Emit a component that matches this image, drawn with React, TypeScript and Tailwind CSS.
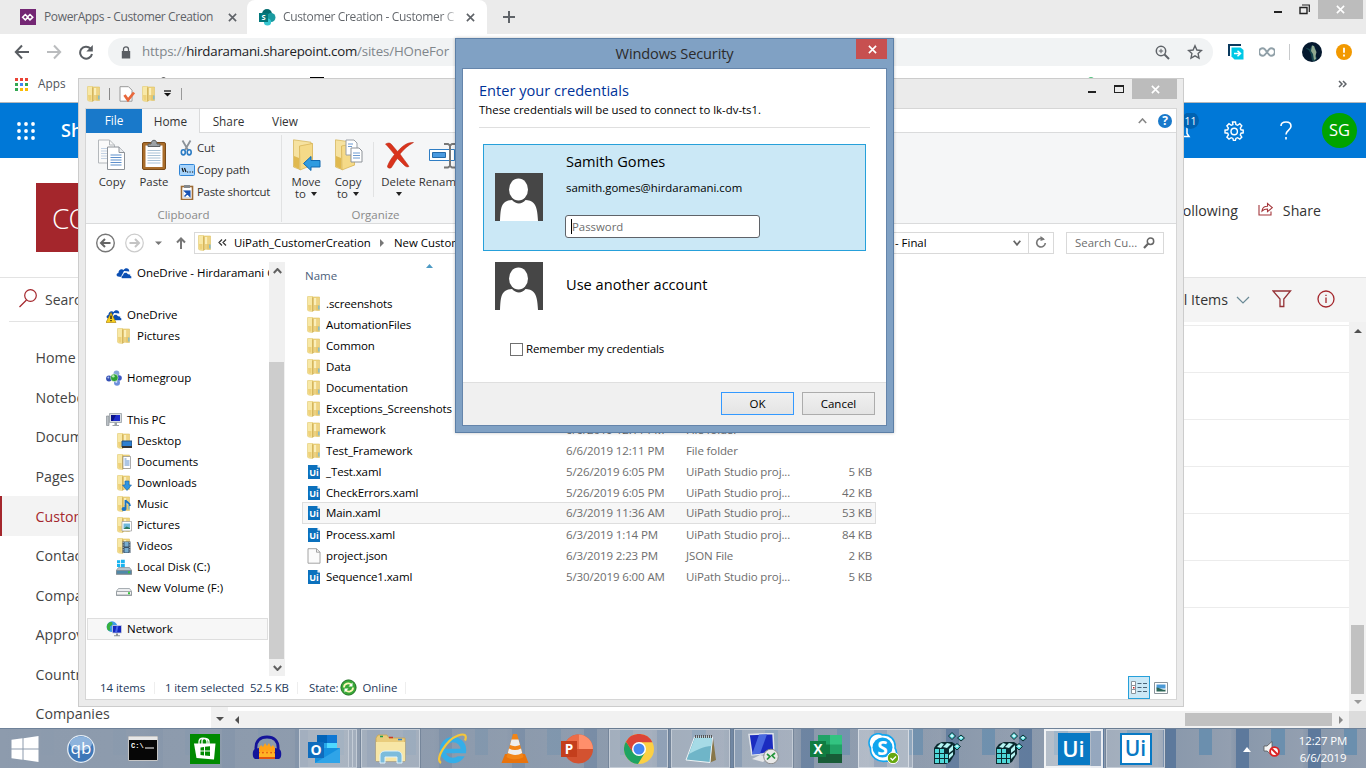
import React from "react";

type Kids = { children?: React.ReactNode };

/* ---------- small icons ---------- */

const Folder = ({ children }: Kids) => (
  <svg width="16" height="16" viewBox="0 0 16 16" className="shrink-0">
    <path d="M6 1h7.500v13.500H6z" fill="#f0d67c" stroke="#dcc067" strokeWidth=".6" />
    <path d="M1.500.6 6.500.3v15.200L2.400 15l-.9-1z" fill="#f8e8a6" stroke="#e3c970" strokeWidth=".6" />
    <path d="M2 9h3.500v5.500H2.500z" fill="#efd27a" />
    <path d="M6.400 1.200 7.600 2v13l-1.200.5z" fill="#c9a548" />
    <path d="M7.700 2h2.600v12.500H7.700z" fill="#fbefbb" />
    <path d="M10.400 2h2.800v12h-2.800z" fill="#eed485" />
    <path d="M8 9h5v5H8z" fill="#e2be5c" fillOpacity=".6" />
    <path d="M12.300 9.500h1.200v4h-1.200z" fill="#6ab8e6" />
    {children}
  </svg>
);

const UiFile = () => (
  <svg width="16" height="16" viewBox="0 0 16 16" className="shrink-0 font-['Open_Sans',sans-serif]">
    <path d="M2 1h9.500L14 3.500V15H2z" fill="#0c71bd" />
    <path d="M11.500 1 14 3.500h-2.500z" fill="#fff" />
    <text x="8" y="11.600" fontSize="9" fontWeight="700" fill="#fff" textAnchor="middle">Ui</text>
  </svg>
);

const BlankFile = () => (
  <svg width="16" height="16" viewBox="0 0 16 16" className="shrink-0">
    <path d="M2 .7h8.500L14 4.200v11H2z" fill="#fbfbfb" stroke="#9a9a9a" strokeWidth=".9" />
    <path d="M10.500.7v3.500H14" fill="none" stroke="#9a9a9a" strokeWidth=".9" />
  </svg>
);

const Cloud = ({ warn }: { warn?: boolean }) => (
  <svg width="16" height="16" viewBox="0 0 16 16" className="shrink-0">
    <path d="M2 11.500C0 11 .2 8 2.400 8c0-3 3-5 5.200-3C9.300 2 13.500 3 13.300 6.500L8 6 5 12z" fill="#0b4fb3" />
    <path d="M6.500 13.500C4.600 13 5 10.300 6.800 10.200 7 7 11 6.500 12 9c2.400-.3 2.600 1 2.500 1.700 1.600.3 1.700 2.800 0 2.800z" fill="#0b4fb3" stroke="#fff" strokeWidth=".6" />
    {warn && (
      <>
        <path d="M5 5.500 10 15.500H0z" fill="#f8cf1c" stroke="#a97c00" strokeWidth=".6" />
        <path d="M5 8.500v3.500M5 13v1.300" stroke="#222" strokeWidth="1.400" />
      </>
    )}
  </svg>
);

const Homegroup = () => (
  <svg width="16" height="16" viewBox="0 0 16 16" className="shrink-0">
    <circle cx="3" cy="8.500" r="2.900" fill="#3450b4" />
    <circle cx="2.300" cy="7.500" r="1" fill="#a9bdf0" />
    <circle cx="10.500" cy="3.300" r="2.900" fill="#86a6d8" />
    <circle cx="13" cy="8" r="2.800" fill="#3c58c4" />
    <circle cx="11" cy="12.700" r="3" fill="#6c8fdc" />
    <circle cx="10.300" cy="11.800" r="1.100" fill="#cddbf8" />
    <circle cx="8.300" cy="7.800" r="3.800" fill="#2da134" stroke="#fff" strokeWidth=".5" />
    <circle cx="7.300" cy="6.300" r="1.300" fill="#b8ecb2" />
  </svg>
);

const Monitor = () => (
  <svg width="16" height="16" viewBox="0 0 16 16" className="shrink-0">
    <path d="M.5 4h2.500v9.500H.5z" fill="#b9bfc4" stroke="#7d858c" strokeWidth=".6" />
    <path d="M3.500 1.500h12v9h-12z" fill="#d9dde0" stroke="#8d959b" strokeWidth=".7" />
    <path d="M5 3h9v6H5z" fill="#1d2ccb" />
    <path d="m5 3 5 0-3 6H5z" fill="#0a128a" />
    <path d="M8.500 10.500h2.500V13H13v1H6.500v-1h2z" fill="#9aa1a6" />
  </svg>
);

const Network = () => (
  <svg width="16" height="16" viewBox="0 0 16 16" className="shrink-0">
    <circle cx="6" cy="5.700" r="5.400" fill="#3e9be8" />
    <path d="M2 2.500C5 0 7 1 6.500 3S3 5 4 7s0 3-1.500 2.500S0 5 2 2.500z" fill="#37b23c" />
    <path d="M6.500 4.500h9v7.500h-9z" fill="#1527c0" stroke="#cdd3da" strokeWidth=".8" />
    <path d="m10.500 5 2 0-1.500 6.500H9z" fill="#4a66e6" />
    <path d="M10 12.500h2v1.800h2v1H8v-1h2z" fill="#8b9298" />
  </svg>
);

const Disk = ({ win }: { win?: boolean }) => (
  <svg width="16" height="16" viewBox="0 0 16 16" className="shrink-0">
    {win && <path d="M1 1.200h3.200v3H1zM5 .8h3.800v3.400H5zM1 5h3.200v3H1zM5 5h3.800v3.500H5z" fill="#18b4f0" />}
    <path d="M2.500 8.500h11l2.300 3v4H.2v-4z" fill={win ? "#b8c4cb" : "#eceef0"} stroke="#878f95" strokeWidth=".7" />
    <path d="M.5 11.500h15V15H.5z" fill={win ? "#4f89a8" : "#f4f4f4"} stroke="#7f878d" strokeWidth=".7" />
    <path d="M12 12.200h2v2h-2z" fill="#35c23a" />
  </svg>
);

const CloseX = ({ c, s = 9, w = 1.8 }: { c: string; s?: number; w?: number }) => (
  <svg width={s} height={s} viewBox="0 0 10 10">
    <path d="m1 1 8 8M9 1 1 9" stroke={c} strokeWidth={w} />
  </svg>
);

const Avatar = () => (
  <svg width="48" height="48" viewBox="0 0 48 48" className="shrink-0">
    <path d="M0 0h48v48H0z" fill="#464646" />
    <ellipse cx="23.500" cy="16.500" rx="9.500" ry="11" fill="#fff" />
    <path d="M5 48c.5-10 .8-15 4-18 1.500-2 5-3 8-3 4 4.500 10 4.500 13.500 0 3 0 6.500 1 8 3 3 3 4 8 4.500 18z" fill="#fff" />
  </svg>
);

/* ---------- browser ---------- */

const TabStrip = () => (
  <div className="flex h-[34px] bg-[#ebebeb]">
    <div className="flex w-[247px] items-center pl-5">
      <svg width="16" height="16" viewBox="0 0 16 16">
        <path d="M0 0h16v16H0z" fill="#742774" />
        <path d="M5.300 5.500 8 8.200l-2.700 2.700L2.600 8.200zM10 5.500l2.800 2.700L10 10.900 7.300 8.200z" fill="none" stroke="#fff" strokeWidth="1.500" />
      </svg>
      <span className="ml-2 w-[184px] text-[12px] tracking-[-0.350px] whitespace-nowrap text-[#5f6368]">PowerApps - Customer Creation</span>
      <CloseX c="#5f6368" s={9} />
    </div>
    <div className="flex w-[240px] items-center rounded-t-lg bg-white pl-3">
      <svg width="17" height="17" viewBox="0 0 17 17" className="shrink-0">
        <circle cx="8" cy="5" r="5" fill="#036c70" />
        <circle cx="12" cy="8.500" r="4.500" fill="#1a9ba1" />
        <circle cx="8.500" cy="13" r="3.600" fill="#37c6d0" />
        <path d="M0 4h9v9H0z" fill="#03787c" />
        <text x="4.500" y="11.200" fontSize="7.500" fontWeight="700" fill="#fff" textAnchor="middle">S</text>
      </svg>
      <span className="ml-[7px] w-[178px] bg-[linear-gradient(90deg,#5f6368_158px,#fff_178px)] bg-clip-text text-[12px] tracking-[-0.350px] whitespace-nowrap text-transparent">
        Customer Creation - Customer C
      </span>
      <span className="ml-[5px]"><CloseX c="#5f6368" s={9} /></span>
    </div>
    <div className="flex items-center pl-[16px]">
      <svg width="12" height="12" viewBox="0 0 12 12">
        <path d="M6 0v12M0 6h12" stroke="#5f6368" strokeWidth="2" />
      </svg>
    </div>
    <div className="ml-auto flex h-[19px] items-center">
      <div className="mt-[5px] h-[2px] w-2 bg-[#222]" />
      <svg width="11" height="11" viewBox="0 0 11 11" className="ml-[17px]">
        <path d="M1 3.500h7v6H1z" fill="none" stroke="#222" strokeWidth="1.400" />
        <path d="M3 1h7.300v7" fill="none" stroke="#222" strokeWidth="1.200" />
      </svg>
      <div className="ml-2 flex h-[19px] w-[45px] items-center justify-center bg-[#bcbcbc]">
        <CloseX c="#fff" s={9} />
      </div>
      <div className="w-[3px]" />
    </div>
  </div>
);

const Toolbar = () => (
  <div className="flex h-9 items-center bg-white pl-[14px]">
    <svg width="80" height="16" viewBox="0 0 80 16" fill="none" strokeWidth="2">
      <path d="M15 8H2M8 1.500 1.800 8 8 14.500" stroke="#5a5e63" />
      <path d="M33 8h13M40 1.500 46.200 8 40 14.500" stroke="#babcbe" />
      <path d="M76.500 4.500A6 6 0 1 0 78 10" stroke="#5a5e63" />
      <path d="M78.800 1v6.500h-6.500z" fill="#5a5e63" />
    </svg>
    <div className="ml-[14px] flex h-7 w-[1105px] items-center rounded-full bg-[#f1f3f4] pl-[13px] text-[13.300px] tracking-[-0.150px] text-[#80868b]">
      <svg width="10" height="13" viewBox="0 0 10 13">
        <path d="M.8 5h8.400v7.500H.8z" fill="#5a5e63" />
        <path d="M2.500 5.500V3.300a2.500 2.500 0 0 1 5 0v2.200" fill="none" stroke="#5a5e63" strokeWidth="1.300" />
      </svg>
      <span className="ml-[11px] whitespace-nowrap">
        https://<span className="tracking-[-0.250px] text-[#202124]">hirdaramani.sharepoint.com</span>/sites/HOneFor
      </span>
      <svg width="15" height="15" viewBox="0 0 15 15" className="ml-auto" fill="none" stroke="#5f6368">
        <circle cx="6" cy="6" r="4.700" strokeWidth="1.500" />
        <path d="m9.500 9.500 4.500 4.500" strokeWidth="1.900" />
        <path d="M6 3.800v4.400M3.800 6h4.400" />
      </svg>
      <svg width="16" height="16" viewBox="0 0 16 16" className="mr-[10px] ml-[17px]">
        <path d="m8 1.800 1.900 4.200 4.500.5-3.300 3.100.9 4.500L8 11.800l-4 2.300.9-4.500L1.600 6.500l4.500-.5z" fill="none" stroke="#5f6368" strokeWidth="1.400" />
      </svg>
    </div>
    <svg width="16" height="16" viewBox="0 0 16 16" className="ml-[15px]">
      <path d="M1 12V1h12" fill="none" stroke="#0a3a5e" strokeWidth="2" />
      <path d="M3.500 3.500h9L15.500 6v9.500h-9l-3-3z" fill="#00c8e6" />
      <path d="M6 9.500h6M9.500 6.700l3 2.800-3 2.800" fill="none" stroke="#fff" strokeWidth="1.500" />
    </svg>
    <svg width="16" height="10" viewBox="0 0 16 10" className="ml-[15px]">
      <path d="M8 5C6 2 5.300 1.200 3.900 1.200a3.800 3.800 0 0 0 0 7.600C5.300 8.800 6 8 8 5s2.700-3.800 4.100-3.800a3.800 3.800 0 0 1 0 7.600C10.700 8.800 10 8 8 5z" fill="none" stroke="#90a0a8" strokeWidth="2" />
    </svg>
    <div className="ml-[14px] h-4 w-px bg-[#c8cacc]" />
    <svg width="20" height="20" viewBox="0 0 20 20" className="ml-[12px]">
      <circle cx="10" cy="10" r="10" fill="#04182e" />
      <path d="M3 5.500 8 7l2-4 2.500 1.500 1.500 4-1 3 2 5-2.500 3-2.500-1-1-6-2-4z" fill="#1d5357" fillOpacity=".8" />
      <path d="m10 3.500 2 .5 1 3 1.500 3-1 4 .5 3-2 1-1-6-2-3z" fill="#8fa890" />
    </svg>
    <svg width="16" height="16" viewBox="0 0 16 16" className="ml-[14px]">
      <circle cx="8" cy="8" r="8" fill="#f29900" />
      <path d="M8 3.700v5M8 10.500v2" stroke="#fff" strokeWidth="1.800" />
    </svg>
  </div>
);

const Bookmarks = () => (
  <div className="flex h-[33px] items-center border-b border-[#b5b8bb] bg-white pb-[4px] pl-[15px] text-[#50545a]">
    <svg width="13" height="13" viewBox="0 0 13 13">
      <path d="M0 0h3v3H0zM5 0h3v3H5zM10 0h3v3h-3z" fill="#ea4335" />
      <path d="M0 5h3v3H0zM10 5h3v3h-3zM0 10h3v3H0z" fill="#34a853" />
      <path d="M5 5h3v3H5z" fill="#4285f4" />
      <path d="M5 10h3v3H5zM10 10h3v3h-3z" fill="#fbbc05" />
    </svg>
    <span className="ml-[10px] text-[11.800px]">Apps</span>
    <span className="ml-[95px] h-[14px] w-[5px] rounded bg-[#666]" />
    <span className="ml-[144px] h-[14px] w-[14px] bg-black" />
    <span className="ml-[764px] h-[14px] w-[6px] rounded bg-[#4fc27b]" />
    <svg width="9" height="8" viewBox="0 0 9 8" className="mr-[19px] ml-auto">
      <path d="m1 1 3 3-3 3M5 1l3 3-3 3" fill="none" stroke="#5f6368" strokeWidth="1.500" />
    </svg>
  </div>
);

const SuiteBar = () => (
  <div className="flex h-[55px] items-center bg-[#0078d7] pl-[17px] text-white">
    <svg width="18" height="18" viewBox="0 0 18 18" fill="#fff">
      {[2, 9, 16].map((y) => [2, 9, 16].map((x) => <circle key={`${x}-${y}`} cx={x} cy={y} r="1.900" />))}
    </svg>
    <span className="ml-[26px] text-[18px] font-semibold">SharePoint</span>
    <svg width="44" height="36" viewBox="0 0 44 36" className="ml-auto">
      <path d="M7 23.500h17l-2-3V14a6 6 0 0 0-12 0v7z" fill="none" stroke="#fff" strokeWidth="1.500" />
      <circle cx="25.500" cy="7.500" r="8.500" fill="#0062b1" />
      <text x="25.500" y="11.500" fontSize="10.500" fill="#fff" textAnchor="middle">11</text>
    </svg>
    <svg width="20" height="20" viewBox="0 0 20 20" fill="none" stroke="#fff" strokeWidth="1.400" className="ml-[15px]">
      <path d="m8.500 1 .4 2.600-1.700.7L5 2.700 2.900 4.900 4.400 7l-.7 1.800L1 9.200v2.600l2.700.4.7 1.700-1.500 2.200L5 18.200l2.200-1.500 1.700.7.500 2h2l.5-2 1.700-.7 2.200 1.500 2-2.100-1.500-2.200.7-1.700 2.200-.4V9.200l-2.200-.4L16.300 7l1.500-2.100-2-2.200-2.200 1.600-1.700-.7L11.500 1z" />
      <circle cx="10.200" cy="10.500" r="3.200" />
    </svg>
    <svg width="12" height="19" viewBox="0 0 12 19" className="ml-[36px]">
      <path d="M1 5C1 2.300 3.200 1 6 1s5 1.500 5 4.200c0 3.800-5 4-5 8.300M6 16v2.500" fill="none" stroke="#fff" strokeWidth="1.600" />
    </svg>
    <div className="mr-[9px] ml-[30px] flex h-[35px] w-[35px] items-center justify-center rounded-full bg-[#00a300] text-[16.500px]">SG</div>
  </div>
);

const siteNav = ["Home", "Notebook", "Documents", "Pages", "Customer Creation", "Contacts", "Company", "Approvals", "Countries", "Companies"];

const Browser = () => (
  <div className="flex h-[728px] flex-col bg-white">
    <TabStrip />
    <Toolbar />
    <Bookmarks />
    <SuiteBar />
    <div className="flex h-[120px] border-b border-[#e3e3e3] pt-[25px] pl-9">
      <div className="h-[69px] w-[70px] overflow-hidden bg-[#a4262c] pt-[14px] pl-4 text-[28px] font-light tracking-[-1px] text-white">CO</div>
      <div className="mt-5 ml-auto flex h-4 items-center text-[14.200px] text-[#333]">
        <span>Following</span>
        <svg width="15" height="14" viewBox="0 0 15 14" className="-mt-1 ml-5" fill="none" stroke="#a4373c" strokeWidth="1.100">
          <path d="M1 3v10h12V9.500" />
          <path d="M4 9c.3-3 2-4.700 5.500-4.700V1.500l4.800 4.200-4.800 4V7C7 7 5.500 7.500 4 9z" />
        </svg>
        <span className="mr-[45px] ml-[10px]">Share</span>
      </div>
    </div>
    <div className="flex h-[450px]">
      <div className="relative flex w-[228px] flex-col overflow-hidden text-[14.200px] text-[#444]">
        <div className="ml-[9px] flex h-11 shrink-0 items-center border-b border-[#e3e3e3] pl-[10px]">
          <svg width="18" height="19" viewBox="0 0 18 19" fill="none" stroke="#a4262c" strokeWidth="1.200" className="-mt-[3px]">
            <circle cx="11.500" cy="6.500" r="5.800" />
            <path d="M7.500 11 .5 18" />
          </svg>
          <span className="ml-2 text-[14px]">Search</span>
        </div>
        <div className="flex shrink-0 flex-col pt-[16px]">
          {siteNav.map((n) => (
            <div
              key={n}
              className={
                n === "Customer Creation"
                  ? "flex h-[39.600px] items-center border-l-2 border-[#a4262c] bg-[#f3f3f3] pl-[33.500px] whitespace-nowrap text-[#a4262c]"
                  : "flex h-[39.600px] items-center pl-[35.500px] whitespace-nowrap"
              }
            >
              {n}
            </div>
          ))}
        </div>
        <div className="absolute top-0 right-0 flex h-[450px] w-[17px] items-end justify-center bg-[#f1f1f1] pb-[7px]">
          <svg width="8" height="4" viewBox="0 0 8 4"><path d="M0 0h8L4 4z" fill="#505050" /></svg>
        </div>
      </div>
      <div className="flex flex-1 flex-col">
        <div className="flex h-11 items-center justify-end bg-[#f4f4f4] text-[14.200px] text-[#333]">
          <span>All Items</span>
          <svg width="14" height="8" viewBox="0 0 14 8" className="ml-2"><path d="m1 1 6 6 6-6" fill="none" stroke="#6a8a96" strokeWidth="1.200" /></svg>
          <svg width="20" height="18" viewBox="0 0 20 18" className="-mt-[2px] ml-[22px]"><path d="M1 1h17.500l-6.700 8v7.500H8V9z" fill="none" stroke="#953236" strokeWidth="1.300" /></svg>
          <svg width="18" height="18" viewBox="0 0 18 18" className="-mt-[3px] mr-[31px] ml-[25px]" fill="none" stroke="#a4262c">
            <circle cx="9" cy="9" r="8" strokeWidth="1.300" />
            <path d="M9 7.500v5.500M9 4.700v1.300" strokeWidth="1.300" />
          </svg>
        </div>
        <div className="flex h-[389px]">
          <div className="flex-1 pt-[3px]">
            {[0, 1, 2, 3, 4, 5, 6].map((i) => (
              <div key={i} className="h-[47px] border-t border-[#ececec]" />
            ))}
          </div>
          <div className="flex w-[17px] flex-col items-center bg-[#f1f1f1] pt-[7px]">
            <svg width="8" height="4" viewBox="0 0 8 4"><path d="M0 4h8L4 0z" fill="#505050" /></svg>
            <div className="mt-[292px] h-[69px] w-[13px] bg-[#c1c1c1]" />
            <svg width="8" height="4" viewBox="0 0 8 4" className="mt-[6px]"><path d="M0 0h8L4 4z" fill="#9a9a9a" /></svg>
          </div>
        </div>
        <div className="flex h-[17px] items-center bg-[#f1f1f1] pl-[7px]">
          <svg width="4" height="8" viewBox="0 0 4 8"><path d="M4 0v8L0 4z" fill="#505050" /></svg>
          <div className="ml-auto h-[13px] w-[147px] bg-[#c1c1c1]" />
          <svg width="4" height="8" viewBox="0 0 4 8" className="mr-[6px] ml-[7px]"><path d="M0 0v8l4-4z" fill="#8a8a8a" /></svg>
          <div className="h-[17px] w-[17px] bg-[#dcdcdc]" />
        </div>
      </div>
    </div>
  </div>
);

/* ---------- explorer ---------- */

const BigFolder = ({ children }: Kids) => (
  <svg width="30" height="32" viewBox="0 0 30 32">
    <path d="M6 4h15.500v22.500L8 30z" fill="#e4c468" />
    <path d="M2.500.8 20 3.200v3L9 8v22.500L2.500 28z" fill="#f6e2a0" stroke="#d3b050" strokeWidth=".7" />
    <path d="M8.500 7 21.500 4.500V26L9 31z" fill="#f5da88" stroke="#d5b052" strokeWidth=".7" />
    <path d="M3 17 8 19v11l-5-2.500z" fill="#e0b94f" />
    {children}
  </svg>
);

const Pages = () => (
  <svg width="30" height="32" viewBox="0 0 30 32">
    <path d="M1.500 1h11l5 5v18h-16z" fill="#fafafa" stroke="#b4b8bc" />
    <path d="M12.500 1v5h5" fill="none" stroke="#b4b8bc" />
    <path d="M4 9.500h6M4 12h6M4 14.500h6M4 17h6M4 19.500h6" stroke="#c3d2e4" />
    <path d="M10.500 8h11.500l5.500 5.500v17h-17z" fill="#fff" stroke="#8d9298" />
    <path d="M22 8v5.500h5.500" fill="#e9ebee" stroke="#8d9298" />
    <path d="M13.500 16h11M13.500 18.500h11M13.500 21h11M13.500 23.500h11M13.500 26h11" stroke="#5d8fcc" strokeWidth="1.100" />
  </svg>
);

const PasteIcon = () => (
  <svg width="26" height="32" viewBox="0 0 26 32">
    <rect x="1.500" y="3.500" width="23" height="27" rx="1.500" fill="#a96d2b" stroke="#7a4a18" />
    <path d="M4.500 6.500h17V28h-17z" fill="#fff" />
    <path d="M6.500 11.500h13M6.500 14h13M6.500 16.500h13M6.500 19h13M6.500 21.500h13M6.500 24h13" stroke="#a9c2d6" />
    <path d="M7 7.500V5h3c0-5 6-5 6 0h3v2.500z" fill="#9ca1a5" stroke="#5e6265" />
  </svg>
);

const DownTri = () => (
  <svg width="6" height="4" viewBox="0 0 6 4" className="inline-block"><path d="M0 0h6L3 4z" fill="#222" /></svg>
);

const Tool = ({ icon, l1, l2, w }: { icon: React.ReactNode; l1: string; l2?: React.ReactNode; w: string }) => (
  <div className={`flex shrink-0 flex-col items-center ${w}`}>
    {icon}
    <span className="mt-[4px] h-[13px] leading-[13px] whitespace-nowrap">{l1}</span>
    <span className="flex h-[12px] items-center gap-[5px] leading-[12px]">{l2}</span>
  </div>
);

const Ribbon = () => (
  <div className="flex h-[91px] border-b border-[#dadbdc] bg-[#f5f6f7] text-[11.400px] text-[#333]">
    <div className="mt-[2px] flex h-[87px] w-[196px] flex-col border-r border-[#e1e2e3] pt-[4px]">
      <div className="flex h-[68px]">
        <div className="w-[5px]" />
        <Tool icon={<Pages />} l1="Copy" w="w-[42px]" />
        <Tool icon={<PasteIcon />} l1="Paste" w="w-[42px]" />
        <div className="-mt-[2px] flex flex-col pl-[4px] tracking-[-0.150px]">
          <div className="flex h-[22px] items-center">
            <svg width="15" height="16" viewBox="0 0 15 16" className="mx-px">
              <path d="m2.500.5 5.500 9.500M10.500.5 5 10" stroke="#8b9299" strokeWidth="1.800" />
              <ellipse cx="3.300" cy="12.300" rx="2" ry="2.600" fill="none" stroke="#2c7cc4" strokeWidth="1.600" />
              <ellipse cx="9.200" cy="12.300" rx="2" ry="2.600" fill="none" stroke="#2c7cc4" strokeWidth="1.600" />
            </svg>
            <span className="ml-px">Cut</span>
          </div>
          <div className="flex h-[22px] items-center">
            <svg width="16" height="12" viewBox="0 0 16 12">
              <rect x=".5" y=".5" width="15" height="11" rx="1" fill="#a8d4fb" stroke="#2f84d6" />
              <path d="m3 4 1.500 4M5.500 4 7 8M8 8h1.200M10.500 8h1.200M13 8h1.200" stroke="#111" strokeWidth="1.200" />
            </svg>
            <span className="ml-[2px]">Copy path</span>
          </div>
          <div className="flex h-[22px] items-center">
            <svg width="14" height="15" viewBox="0 0 14 15" className="mx-px">
              <rect x="1.500" y="1.500" width="11" height="13" fill="#fff" stroke="#9c6a33" strokeWidth="1.600" />
              <path d="M4 0h6v3H4z" fill="#85898d" />
              <path d="M3.500 5.500h7v7h-7z" fill="#fff" stroke="#b8c6d8" strokeWidth=".6" />
              <path d="m4.500 11.500 3-3M5 6.300h4.700V11z" fill="#1652b5" stroke="#1652b5" strokeWidth="1.500" />
            </svg>
            <span className="ml-[2px] tracking-[-0.250px] whitespace-nowrap">Paste shortcut</span>
          </div>
        </div>
      </div>
      <span className="mt-[1px] text-center text-[11.500px] leading-[13px] text-[#8a8a8a]">Clipboard</span>
    </div>
    <div className="mt-[2px] flex h-[87px] w-[190px] flex-col pt-[4px]">
      <div className="flex h-[68px]">
        <div className="w-[3px]" />
        <Tool w="w-[42px]" l1="Move" l2={<>to <DownTri /></>} icon={<BigFolder><path d="M12.500 24.500 20 17.500v4h9v6.500h-9v3.500z" fill="#2f9be0" stroke="#1269b0" /></BigFolder>} />
        <Tool
          w="w-[42px]"
          l1="Copy"
          l2={<>to <DownTri /></>}
          icon={
            <BigFolder>
              <path d="M13 1h8l3 3v12H13z" fill="#fff" stroke="#9aa0a6" />
              <path d="M18 9h8l3 3v11H18z" fill="#fff" stroke="#8d9298" />
              <path d="M20 14h7M20 16.500h7M20 19h7M15 5h5M15 7.500h4" stroke="#6d9ad0" />
            </BigFolder>
          }
        />
        <div className="mx-[4px] mt-[3px] h-[55px] w-px bg-[#e1e2e3]" />
        <Tool
          w="w-[41px]"
          l1="Delete"
          l2={<DownTri />}
          icon={
            <svg width="30" height="32" viewBox="0 0 30 32">
              <path d="M1.500 5c3-1.500 4.500-1.500 6.500 1l5.500 6.500c4-4.500 9-9.500 16-9-5.500 3-10 7-13.500 11.500 3 4.500 6.500 8.500 9 12.500-2 1-3.500 0-5-1.500L13.500 19.500c-3 3.500-4.500 7-6.500 9.500-2.500.5-4-.5-3.500-2 1.500-4 4-8 7-11.500C7.500 12 4.500 8 1.500 5z" fill="#d9331c" stroke="#b52713" strokeWidth=".5" />
            </svg>
          }
        />
        <Tool
          w="w-[43px]"
          l1="Rename"
          icon={
            <svg width="34" height="32" viewBox="0 0 34 32">
              <path d="M5.500 10.500h25v11h-25z" fill="#fff" stroke="#2f7dc4" />
              <path d="M8.500 13.500h13v5h-13z" fill="#4a9ae0" stroke="#2469a8" />
              <path d="M20 5h4l2 1.500L28 5h3M26 6v21M20 28.500h4l2-1.500 2 1.500h3" fill="none" stroke="#777" strokeWidth="2" />
            </svg>
          }
        />
      </div>
      <span className="mt-[1px] pr-[3px] text-center text-[11.500px] leading-[13px] text-[#8a8a8a]">Organize</span>
    </div>
  </div>
);

const navRow = "flex h-[21px] shrink-0 items-center gap-[5px] whitespace-nowrap";

const treeItems: { label: string; icon?: React.ReactNode; root?: boolean }[] = [
  { label: "OneDrive - Hirdaramani G", icon: <Cloud /> },
  { label: "" },
  { label: "OneDrive", icon: <Cloud warn />, root: true },
  { label: "Pictures", icon: <Folder /> },
  { label: "" },
  { label: "Homegroup", icon: <Homegroup />, root: true },
  { label: "" },
  { label: "This PC", icon: <Monitor />, root: true },
  { label: "Desktop", icon: <Folder><path d="M6 8h10v6H6z" fill="#2c7fd0" stroke="#24507c" /><path d="M6 13h10v2H6z" fill="#333" /></Folder> },
  { label: "Documents", icon: <Folder><path d="M7 2.500h7.500v12H7z" fill="#fff" stroke="#888" strokeWidth=".7" /><path d="M8.500 5h2M8.500 7h5M8.500 9h5M8.500 11h5" stroke="#5b8cc9" /></Folder> },
  { label: "Downloads", icon: <Folder><path d="M9 6h4v4h2.500L11 15.500 6.500 10H9z" fill="#2f95e0" stroke="#1461a8" strokeWidth=".6" /></Folder> },
  { label: "Music", icon: <Folder><path d="M9.500 4v8.500M9.500 4c1 3 4.500 2 4.500 6" fill="none" stroke="#1a72c4" strokeWidth="1.800" /><ellipse cx="8" cy="13" rx="2.500" ry="2" fill="#1a72c4" /></Folder> },
  { label: "Pictures", icon: <Folder><path d="M6 4.500h9.500V14H6z" fill="#fff" stroke="#999" strokeWidth=".7" /><path d="M7.500 6.500H14V12H7.500z" fill="#6fb8dc" /><path d="m7.500 12 3-2.500L14 11v1z" fill="#2c7a5c" /></Folder> },
  { label: "Videos", icon: <Folder><path d="M6.500 3.500h8V15h-8z" fill="#3a5166" /><path d="M8.500 4h4v4.500h-4zM8.500 10h4v4.500h-4z" fill="#79add0" /><path d="M7.200 4v11M13.800 4v11" stroke="#ddd" strokeDasharray="1.200 1.200" strokeWidth=".8" /></Folder> },
  { label: "Local Disk (C:)", icon: <Disk win /> },
  { label: "New Volume (F:)", icon: <Disk /> },
  { label: "" },
  { label: "Network", icon: <Network />, root: true },
];

const P = "UiPath Studio proj...";
const files: [string, string, string, string][] = [
  [".screenshots", "6/6/2019 12:11 PM", "File folder", ""],
  ["AutomationFiles", "6/6/2019 12:11 PM", "File folder", ""],
  ["Common", "6/6/2019 12:11 PM", "File folder", ""],
  ["Data", "6/6/2019 12:11 PM", "File folder", ""],
  ["Documentation", "6/6/2019 12:11 PM", "File folder", ""],
  ["Exceptions_Screenshots", "6/6/2019 12:11 PM", "File folder", ""],
  ["Framework", "6/6/2019 12:11 PM", "File folder", ""],
  ["Test_Framework", "6/6/2019 12:11 PM", "File folder", ""],
  ["_Test.xaml", "5/26/2019 6:05 PM", P, "5 KB"],
  ["CheckErrors.xaml", "5/26/2019 6:05 PM", P, "42 KB"],
  ["Main.xaml", "6/3/2019 11:36 AM", P, "53 KB"],
  ["Process.xaml", "6/3/2019 1:14 PM", P, "84 KB"],
  ["project.json", "6/3/2019 2:23 PM", "JSON File", "2 KB"],
  ["Sequence1.xaml", "5/30/2019 6:00 AM", P, "5 KB"],
];

const ChevTri = () => (
  <svg width="5" height="8" viewBox="0 0 5 8"><path d="M0 0v8l4-4z" fill="#777" /></svg>
);

const AddressBar = () => (
  <div className="flex h-[38px] items-center bg-white pb-px pl-[9px] text-[11.400px] text-black">
    <svg width="92" height="20" viewBox="0 0 92 20" fill="none">
      <circle cx="10.500" cy="10" r="8.800" stroke="#777" strokeWidth="1.400" />
      <path d="M15.500 10H6.500M10 6l-4 4 4 4" stroke="#666" strokeWidth="2" />
      <circle cx="39.500" cy="10" r="8.800" stroke="#ccc" strokeWidth="1.200" />
      <path d="M34.500 10h9M40 6l4 4-4 4" stroke="#c4c4c4" strokeWidth="2" />
      <path d="M60 8.500h7L63.500 12z" fill="#777" />
      <path d="M86 16V6M82 9.500l4-4 4 4" stroke="#777" strokeWidth="2" />
    </svg>
    <div className="ml-[7px] flex h-[22px] w-[860px] items-center border border-[#d9d9d9] pl-[2px] whitespace-nowrap">
      <Folder />
      <svg width="9" height="7" viewBox="0 0 9 7" className="ml-[5px]"><path d="M4 .5 1 3.500l3 3M8 .5 5 3.500l3 3" fill="none" stroke="#333" strokeWidth="1.200" /></svg>
      <span className="ml-[7px] w-[137px] tracking-[-0.050px]">UiPath_CustomerCreation</span>
      <span className="ml-[9px]"><ChevTri /></span>
      <span className="ml-[9px] w-[489px] overflow-hidden">New Custom</span>
      <span className="w-[134px] pl-[12px]">- Final</span>
      <svg width="8" height="6" viewBox="0 0 8 6" className="-ml-[4px]"><path d="m.7.8 3.300 4 3.300-4" fill="none" stroke="#666" strokeWidth="1.800" /></svg>
      <div className="ml-auto flex h-[20px] w-[25px] shrink-0 items-center justify-center border-l border-[#d9d9d9]">
        <svg width="12" height="13" viewBox="0 0 12 13"><path d="M8.500 3.200A4.300 4.300 0 1 0 10.300 7" fill="none" stroke="#777" strokeWidth="1.600" /><path d="M5.500 0v5l4.500-1.500z" fill="#777" /></svg>
      </div>
    </div>
    <div className="ml-[12px] flex h-[22px] w-[98px] items-center border border-[#d9d9d9] pl-[8px] text-[11.400px] text-[#6d6d6d]">
      <span>Search Cu...</span>
      <svg width="12" height="12" viewBox="0 0 12 12" className="mr-[8px] ml-auto"><circle cx="7.500" cy="4.200" r="3.200" fill="none" stroke="#666" strokeWidth="1.500" /><path d="M5 6.800 1 11" stroke="#666" strokeWidth="2.200" /></svg>
    </div>
  </div>
);

const Explorer = () => (
  <div className="absolute top-[78px] left-[78px] flex h-[629px] w-[1106px] flex-col border border-[#cccccc] bg-[#ebebeb] px-[6px]">
    <div className="flex h-[29px]">
      <div className="flex items-center pl-px">
        <Folder />
        <div className="mx-[7px] h-3 w-px bg-[#888]" />
        <svg width="18" height="16" viewBox="0 0 18 16" className="ml-[2px]">
          <path d="M1 .7h8.500L13 4.200v11H1z" fill="#fff" stroke="#999" />
          <path d="m5.500 9 3.500 5L15 6.500" fill="none" stroke="#e8683c" strokeWidth="2.800" />
        </svg>
        <span className="ml-[4px]"><Folder /></span>
        <svg width="7" height="7" viewBox="0 0 7 7" className="ml-[7px]"><path d="M0 1h7" stroke="#111" strokeWidth="1.300" /><path d="M0 3h7L3.500 6.500z" fill="#111" /></svg>
        <div className="ml-[10px] h-3 w-px bg-[#999]" />
      </div>
      <div className="ml-auto flex h-[20px] items-center">
        <div className="mt-[5px] h-[2px] w-2 bg-[#222]" />
        <div className="ml-[18px] h-[8px] w-[10px] border border-t-2 border-[#222]" />
        <div className="ml-[8px] flex h-[20px] w-[45px] items-center justify-center bg-[#bcbcbc] pl-px">
          <CloseX c="#fff" s={9} />
        </div>
      </div>
    </div>
    <div className="flex h-[592px] flex-col border border-[#d6d6d6] bg-white">
      <div className="flex h-[24px] shrink-0 border-b border-[#dadbdc] text-[11.800px] text-[#333]">
        <div className="flex h-[24px] w-[56px] items-center justify-center bg-[#1979ca] text-white">File</div>
        <div className="flex h-[24px] w-[58px] items-center justify-center border-r border-[#dadbdc] bg-[#f5f6f7] pt-[2px]">Home</div>
        <div className="flex w-[57px] items-center justify-center pt-[2px]">Share</div>
        <div className="flex w-[56px] items-center justify-center pt-[2px]">View</div>
        <div className="mr-[4px] ml-auto flex items-center gap-[11px]">
          <svg width="9" height="6" viewBox="0 0 9 6"><path d="m.8 5 3.700-4 3.700 4" fill="none" stroke="#888" strokeWidth="1.600" /></svg>
          <div className="flex h-[14px] w-[14px] items-center justify-center rounded-full bg-[#1979ca] text-[12px] font-bold text-white">?</div>
        </div>
      </div>
      <Ribbon />
      <AddressBar />
      <div className="flex h-[414px] text-[11.500px] text-black">
        <div className="flex w-[183px] flex-col">
          {treeItems.map((t, i) =>
            t.label === "Network" ? (
              <div key={i} className="-mt-px flex h-[22px] w-[181px] items-center gap-[5px] self-center border border-[#dedede] bg-[#f7f7f7] pl-[18px]">
                {t.icon}
                <span>{t.label}</span>
              </div>
            ) : (
              <div key={i} className={t.root ? `${navRow} pl-[20px]` : `${navRow} pl-[30px]`}>
                {t.icon}
                <span className="tracking-[-0.030px]">{t.label}</span>
              </div>
            )
          )}
        </div>
        <div className="relative flex w-[16px] flex-col items-center bg-[#f0f0f0]">
          <svg width="9" height="6" viewBox="0 0 9 6" className="mt-[6px]"><path d="m.8 5 3.700-4 3.700 4" fill="none" stroke="#606060" strokeWidth="2" /></svg>
          <div className="mt-[88px] h-[297px] w-full shrink-0 border-r border-[#f0f0f0] bg-[#cdcdcd]" />
          <svg width="9" height="6" viewBox="0 0 9 6" className="mt-[6px]"><path d="m.8 1 3.700 4 3.700-4" fill="none" stroke="#606060" strokeWidth="2" /></svg>
        </div>
        <div className="flex flex-1 flex-col pl-[17px]">
          <div className="flex h-[31px] shrink-0 items-center pb-[4px]">
            <span className="pl-[3px] text-[#4c607a]">Name</span>
            <svg width="7" height="4" viewBox="0 0 7 4" className="-mt-[19px] ml-[89px]"><path d="M0 4h7L3.500 0z" fill="#4d9ac4" /></svg>
          </div>
          {files.map(([n, d, t, s]) => (
            <div
              key={n}
              className={
                n === "Main.xaml"
                  ? "-mt-px flex h-[22px] w-[574px] shrink-0 items-center border border-[#dedede] bg-[#f7f7f7] pl-[3px] tracking-[-0.120px] text-[#6d6d6d]"
                  : "flex h-[21px] w-[574px] shrink-0 items-center border-x border-transparent pl-[3px] tracking-[-0.120px] text-[#6d6d6d]"
              }
            >
              {t === "File folder" ? <Folder /> : t === "JSON File" ? <BlankFile /> : <UiFile />}
              <span className="ml-[4px] w-[240px] text-black">{n}</span>
              <span className="w-[120px]">{d}</span>
              <span className="w-[120px]">{t}</span>
              <span className="w-[66px] text-right">{s}</span>
            </div>
          ))}
        </div>
      </div>
      <div className="flex h-[23px] items-center pl-[14px] text-[11.400px] whitespace-nowrap text-[#1e395b]">
        <span className="w-[54px]">14 items</span>
        <div className="h-3 w-px bg-[#eee]" />
        <span className="ml-[10px] w-[85px] tracking-[-0.080px]">1 item selected</span>
        <span className="w-[47px] tracking-[-0.150px]">52.5 KB</span>
        <div className="h-3 w-px bg-[#eee]" />
        <span className="ml-[11px] tracking-[-0.100px]">State:</span>
        <svg width="17" height="17" viewBox="0 0 17 17" className="ml-[2px]">
          <circle cx="8.500" cy="8.500" r="7.600" fill="#38a838" stroke="#1d7020" />
          <path d="M4 8.500c0-4 5-5.500 7.500-2.500M13 8.500c0 4-5 5.500-7.500 2.500" fill="none" stroke="#fff9b8" strokeWidth="1.800" />
          <path d="M12.500 3.500v4h-4zM4.500 13.500v-4h4z" fill="#fff" />
        </svg>
        <span className="ml-[5px]">Online</span>
        <div className="ml-[8px] h-3 w-px bg-[#eee]" />
        <div className="ml-auto flex h-[23px] w-[22px] items-center justify-center border border-[#26a0da] bg-[#cbe8f6]">
          <svg width="16" height="13" viewBox="0 0 16 13">
            <path d="M.5.500h4v12h-4zM.5 4.500h4M.5 8.500h4" fill="#fff" stroke="#8a949c" />
            <path d="M6.500 2.500h4M12 2.500h4M6.500 6.500h4M12 6.500h4M6.500 10.500h4M12 10.500h4" stroke="#4a6478" />
            <path d="M2 6h1.500v1.500H2z" fill="#c22" />
          </svg>
        </div>
        <svg width="14" height="12" viewBox="0 0 14 12" className="mr-[8px] ml-[4px]">
          <path d="M.5.500h13v11H.5z" fill="#fff" stroke="#8a949c" />
          <path d="M2.500 2.500h9v4h-9z" fill="#4c9ad6" />
          <path d="M2.500 5.500c3 0 5 3 9 2v2h-9z" fill="#2c6657" />
        </svg>
      </div>
    </div>
  </div>
);

/* ---------- credential dialog ---------- */

const Dialog = () => (
  <div className="absolute top-[38px] left-[455px] flex h-[395px] w-[439px] flex-col border border-[#5c7fa6] bg-[#80a1c4] px-[6px] shadow-[0_0_3px_rgba(0,0,0,0.25)]">
    <div className="relative flex h-[29px] items-center justify-center text-[14.600px] text-[#2b2b2b]">
      <span className="tracking-[-0.150px]">Windows Security</span>
      <div className="absolute top-0 right-0 flex h-[20px] w-[31px] items-center justify-center bg-[#c75050] pl-px">
        <CloseX c="#fff" s={9} />
      </div>
    </div>
    <div className="flex h-[358px] flex-col border border-[#6585ab] bg-white text-black">
      <div className="mx-4 flex h-[59px] shrink-0 flex-col border-b border-[#dfdfdf] pt-[10px]">
        <span className="text-[14.600px] leading-[22px] text-[#003399]">Enter your credentials</span>
        <span className="mt-px text-[11.400px] leading-[16px]">These credentials will be used to connect to lk-dv-ts1.</span>
      </div>
      <div className="mt-[16px] ml-[20px] flex h-[107px] w-[383px] shrink-0 border border-[#26a0da] bg-[#cbe8f6] pl-[11px]">
        <div className="pt-[28px]"><Avatar /></div>
        <div className="ml-[22px] flex flex-col pt-[6px]">
          <span className="pl-px text-[14.600px] leading-[20px]">Samith Gomes</span>
          <span className="mt-[10px] pl-px text-[11.400px] leading-[14px]">samith.gomes@hirdaramani.com</span>
          <div className="mt-[20px] flex h-[23px] w-[195px] items-center rounded-[3px] border border-[#5f6369] bg-white pl-[5px] text-[11.400px] text-[#6d6d6d]">
            <div className="h-[15px] w-px bg-black" />
            Password
          </div>
        </div>
      </div>
      <div className="mt-[11px] ml-[32px] flex h-12 items-center">
        <Avatar />
        <span className="-mt-[2px] ml-[23px] text-[14.600px]">Use another account</span>
      </div>
      <div className="mt-[32px] ml-[47px] flex items-center text-[11.500px] leading-[14px]">
        <div className="h-[13px] w-[13px] border border-[#707070]" />
        <span className="ml-[3px] tracking-[-0.120px]">Remember my credentials</span>
      </div>
      <div className="mt-auto flex h-[43px] justify-end gap-2 border-t border-[#dfdfdf] bg-[#f0f0f0] pt-[9px] pr-[11px] text-[11.500px]">
        <div className="flex h-[23px] w-[73px] items-center justify-center border border-[#3399ff] bg-linear-to-b from-[#f0f0f0] to-[#e4e4e4]">OK</div>
        <div className="flex h-[23px] w-[73px] items-center justify-center border border-[#acacac] bg-linear-to-b from-[#f0f0f0] to-[#e4e4e4]">Cancel</div>
      </div>
    </div>
  </div>
);

/* ---------- taskbar ---------- */

const Slot = ({ children, open, active }: Kids & { open?: boolean; active?: boolean }) => (
  <div
    className={
      active
        ? "mr-[3px] flex h-[39px] w-[59px] items-center justify-center border-2 border-white/80 bg-white/35"
        : open
          ? "mr-[3px] flex h-[39px] w-[59px] items-center justify-center border border-[#c4ccd6] bg-white/20 outline outline-[#66788e]/60"
          : "mr-[3px] flex h-[39px] w-[59px] items-center justify-center"
    }
  >
    {children}
  </div>
);

const Regedit = () => (
  <svg width="34" height="34" viewBox="0 0 34 34">
    <path d="M1 16 4 12l5-2h10l3 2v10l-5 8-4 2H1z" fill="#0b2b30" />
    <path d="M2 17h4v4H2zM7 17h4v4H7zM2 22h4v4H2zM7 22h4v4H7zM2 27h4v4H2zM7 27h4v4H7zM12 27h3v4h-3zM12 22h3v4h-3z" fill="#4fd8d8" />
    <path d="m4 15 4-4 3 1-3 4zM10 15l4-4 4 1-4 4zM16 17l4-4v5l-4 3zM16 23l4-3v3l-4 4z" fill="#b5f5f3" />
    <path d="m19 .5 3.500 3.500L19 7.500 15.500 4zM28 3 31.500 6 28 9 24.500 6zM24 11.500l3.500 3-3.500 3.500-3.500-3.500z" fill="#4fd5d8" stroke="#0b2b30" />
    <path d="m19 2 2 2-2 1.500L17 4zM28 4.500l2 1L28 7l-2-1.500zM24 13l2 1-2 1.500-2-1.500z" fill="#cffafa" />
  </svg>
);

const Taskbar = () => (
  <div className="flex h-10 border-t border-[#6f8299] [background:linear-gradient(90deg,#8d9bad_0,#8d9badb0_500px,#8d9bad00_1100px),repeating-linear-gradient(90deg,#6b8fae00_0,#6b8fae00_40.600px,#6b8fae_40.600px,#6b8fae_54px,#6b8fae00_54px,#6b8fae00_72.400px)_0_0/100%_26px_no-repeat,repeating-linear-gradient(90deg,#8f9daf_0,#8896aa_5px,#5d799c_5px,#5d799c_18px,#8a99ac_18px,#939fb0_72.400px)] text-white">
    <div className="flex w-[50px] items-center justify-center">
      <svg width="28" height="26" viewBox="0 0 28 28" fill="#fff" preserveAspectRatio="none">
        <path d="M.5 4 11.500 2.500v11H.5zM12.500 2.300 27.500 0v13.500h-15zM.5 14.500h11v11L.5 24zM12.500 14.500h15V28l-15-2.300z" />
      </svg>
    </div>
    <div className="ml-px flex w-[687px] shrink-0">
      <Slot>
        <svg width="28" height="28" viewBox="0 0 28 28">
          <circle cx="14" cy="14" r="13.300" fill="#3f78b8" stroke="#e4ecf4" strokeWidth="1.300" />
          <ellipse cx="14" cy="8.500" rx="11" ry="7" fill="#8db3dc" />
          <text x="14" y="19" fontSize="17" fill="#fff" textAnchor="middle">qb</text>
        </svg>
      </Slot>
      <Slot>
        <svg width="30" height="26" viewBox="0 0 30 26">
          <path d="M.5.500h29v24H.5z" fill="#060606" stroke="#c5c5c5" />
          <path d="M1 1h28v3H1z" fill="#e7e7e7" />
          <text x="3" y="12" fontSize="7" fontWeight="700" fill="#fff" className="font-['Liberation_Mono',monospace]">C:\</text>
          <path d="M17 12h9" stroke="#fff" />
        </svg>
      </Slot>
      <Slot>
        <svg width="30" height="30" viewBox="0 0 30 30">
          <path d="M0 0h30v30H0z" fill="#008a00" />
          <path d="M4 9.500h21.500L24 25.500 6.500 24z" fill="#fff" />
          <path d="M9 11V8c0-5 8-5 8 0v3M12 11V7c0-4 7-3 7 1v3" fill="none" stroke="#fff" strokeWidth="1.300" />
          <path d="M10.500 13.500 14 13v3.500h-3.500zM15 12.800l5-.5v4.200h-5zM10.500 17.500H14v4l-3.500-.5zM15 17.500h5v4.500l-5-.5z" fill="#008a00" />
        </svg>
      </Slot>
      <Slot>
        <svg width="30" height="27" viewBox="0 0 30 27">
          <path d="m7 13 2-3 2 2 2-4 2 3 2-3 2 4 2-2 2 3v9H7z" fill="#ffa31a" />
          <path d="M7 17h16v7H7z" fill="#e25510" />
          <path d="m7 19 2-3 2 3 2-4 2 4 2-4 2 4 2-3 2 3v3H7z" fill="#ffb325" />
          <path d="M4 15C3 5 9 2 15 2s12 3 11 13" fill="none" stroke="#14149a" strokeWidth="2.800" />
          <path d="M3 14c-3 1-3 9 0 10h4V13zM27 14c3 1 3 9 0 10h-4V13z" fill="#14149a" />
        </svg>
      </Slot>
      <div className="mr-[4px] flex h-[39px] w-[58px]">
        <div className="flex w-[50px] items-center justify-center border border-[#c4ccd6] bg-white/25">
          <svg width="32" height="28" viewBox="0 0 32 28">
            <path d="M9 0h20v16H9z" fill="#28a8ea" />
            <path d="M9 0h10v8H9z" fill="#0364b8" /><path d="M19 0h10v8H19z" fill="#0f78d4" /><path d="M19 8h10v8H19z" fill="#4fd9ff" />
            <path d="M7 13h25v15H7z" fill="#1490df" />
            <path d="m7 28 25-15v15z" fill="#2fa4e8" />
            <path d="M0 7h16v16H0z" fill="#0f6cbd" />
            <text x="8" y="20" fontSize="14" fontWeight="700" fill="#fff" textAnchor="middle">O</text>
          </svg>
        </div>
        <div className="w-[4px] border-y border-r border-[#c4ccd6] bg-white/20" />
        <div className="w-[4px] border-y border-r border-[#c4ccd6] bg-white/20" />
      </div>
      <Slot open>
        <svg width="32" height="30" viewBox="0 0 32 30">
          <path d="M1 4 3 1h9l2 3h16v23H1z" fill="#e9cc7c" stroke="#c9a550" strokeWidth=".8" />
          <path d="M14 3.500h4" stroke="#cc3a24" strokeWidth="1.500" /><path d="M5 2.500h3" stroke="#1e9b50" strokeWidth="1.500" /><path d="M23 5.500h4" stroke="#2b7fd0" strokeWidth="1.500" />
          <path d="M1 8h29v19H1z" fill="#f7e6a6" />
          <path d="M5 29v-7c0-4 3-5 6-5h10c4 0 6 2 6 5v7h-5v-6H10v6z" fill="#7cbcdc" stroke="#e0f3fb" />
        </svg>
      </Slot>
      <Slot>
        <svg width="30" height="32" viewBox="0 0 30 32">
          <circle cx="15" cy="17" r="10.500" fill="none" stroke="#35aee8" strokeWidth="5.500" />
          <path d="M6 18h19" stroke="#35aee8" strokeWidth="4.500" />
          <path d="M17 20.300h13v3H17z" fill="#8d9cae" />
          <path d="M3 30C-3 26 8 7 20 2.500c7-2.500 9 0 7 5" fill="none" stroke="#f5c63a" strokeWidth="2.200" />
        </svg>
      </Slot>
      <Slot>
        <svg width="28" height="31" viewBox="0 0 28 31">
          <path d="M4 21h20l3.500 9H.5z" fill="#e8730c" />
          <path d="M12 1h4l6.500 23c-4 3-13 3-17 0z" fill="#f28517" />
          <path d="m10.500 6.500 7 0 1.500 5.500c-3 1.500-7 1.500-10 0zM8 15.500c4 2 8 2 12 0l1.200 4.500c-4 2.500-10 2.500-14.400 0z" fill="#eeeeee" />
        </svg>
      </Slot>
      <Slot>
        <svg width="32" height="30" viewBox="0 0 32 30">
          <circle cx="17.500" cy="15" r="14.500" fill="#d35230" />
          <path d="M17.500.500A14.500 14.500 0 0 1 32 15H17.500z" fill="#ff8f6b" />
          <path d="M3 15a14.500 14.500 0 0 1 14.500-14.500V15z" fill="#ed6c47" />
          <path d="M0 7h16v16H0z" fill="#c43e1c" />
          <text x="8" y="20" fontSize="13.500" fontWeight="700" fill="#fff" textAnchor="middle">P</text>
        </svg>
      </Slot>
      <Slot open>
        <svg width="30" height="30" viewBox="0 0 30 30">
          <circle cx="15" cy="15" r="15" fill="#fcd044" />
          <path d="M2 7.500A15 15 0 0 0 14 30l7-11.500-6 2.500-6-3z" fill="#1ea362" />
          <path d="M15 8.200h13.400A15 15 0 0 0 2 7.500L8.500 18z" fill="#dc4437" />
          <circle cx="15" cy="15" r="7" fill="#fff" />
          <circle cx="15" cy="15" r="5.500" fill="#4587f2" />
        </svg>
      </Slot>
      <Slot open>
        <svg width="32" height="30" viewBox="0 0 32 30">
          <path d="M28 4 31 26l-6 2.500z" fill="#887648" />
          <path d="M9.500 3h18L25 28.500 1 26z" fill="#6fb5c8" stroke="#eef3f5" />
          <path d="M10 4h17l-.7 8C19 12 12 16 4 20z" fill="#a6dbe6" />
          <path d="M10 2.500h18" stroke="#555" strokeWidth="3" strokeDasharray="1 1" />
        </svg>
      </Slot>
    </div>
    <div className="-ml-[4px] flex shrink-0">
      <Slot open>
        <svg width="32" height="31" viewBox="0 0 32 31">
          <path d="M1 1.500 25 .5l1 19L4 22z" fill="#1b2cc0" stroke="#dfe4ea" strokeWidth="1.500" />
          <path d="m11 1.500 8-.3-7 19.500-8 .8z" fill="#4969e0" />
          <path d="m4 26 8-4 9 2-6 5z" fill="#e4e6e8" />
          <circle cx="23" cy="23.500" r="7.300" fill="#e9e9e9" stroke="#8c8c8c" />
          <path d="m19 21 3 2.500-3 3M27 20l-3 2.500 3 3" fill="none" stroke="#23953a" strokeWidth="1.700" />
        </svg>
      </Slot>
      <Slot>
        <svg width="32" height="28" viewBox="0 0 32 28">
          <path d="M8 0h24v28H8z" fill="#21a366" /><path d="M20 0h12v9.500H20z" fill="#33c481" /><path d="M8 0h12v9.500H8z" fill="#21a366" />
          <path d="M8 9.500h12V19H8z" fill="#107c41" /><path d="M8 19h24v9H8z" fill="#185c37" />
          <path d="M0 6h16v16H0z" fill="#107c41" />
          <text x="8" y="19" fontSize="13.500" fontWeight="700" fill="#fff" textAnchor="middle">X</text>
        </svg>
      </Slot>
      <div className="mr-[4px] flex h-[39px] w-[58px]">
        <div className="flex w-[51px] items-center justify-center border border-[#d4dae2] bg-white/30">
          <svg width="32" height="31" viewBox="0 0 32 31">
            <path d="M8 1c3-1 5 0 6.500 1C22 1 28 7 27 15c4 7-1 14-8 13C10 30 2 24 2.500 15-.5 10 1 3 8 1z" fill="#fff" stroke="#12a5ee" strokeWidth="1.600" />
            <circle cx="14.500" cy="14.500" r="10" fill="#12a5ee" />
            <text x="14.500" y="21.500" fontSize="19" fontWeight="700" fill="#fff" textAnchor="middle">S</text>
            <circle cx="25" cy="25" r="5.700" fill="#66a80f" stroke="#fff" />
            <path d="m22.500 25 2 2 3.500-3.500" fill="none" stroke="#fff" strokeWidth="1.300" />
          </svg>
        </div>
        <div className="w-[4px] border-y border-r border-[#c4ccd6] bg-white/20" />
      </div>
      <Slot><Regedit /></Slot>
      <Slot><Regedit /></Slot>
      <Slot active>
        <div className="flex h-8 w-8 items-center justify-center bg-[#0879c4] text-[22px] font-semibold">Ui</div>
      </Slot>
      <Slot open>
        <div className="flex h-8 w-8 items-center justify-center border-2 border-[#0879c4] bg-white text-[21px] font-semibold text-[#0879c4]">Ui</div>
      </Slot>
    </div>
    <div className="ml-auto flex items-center">
      <svg width="8" height="5" viewBox="0 0 8 5" className="mt-[2px]"><path d="M0 5h8L4 0z" fill="#fff" /></svg>
      <svg width="17" height="16" viewBox="0 0 17 16" className="ml-[12px]">
        <path d="M1 5h3l5-4.500v14L4 10H1z" fill="#f4f4f4" stroke="#555" strokeWidth=".8" />
        <circle cx="11.500" cy="10.500" r="4.400" fill="#fff" stroke="#dc2323" strokeWidth="1.900" />
        <path d="m8.500 7.500 6 6" stroke="#dc2323" strokeWidth="1.900" />
      </svg>
      <div className="mr-[17px] ml-[17px] flex w-[52px] flex-col items-center text-[11.400px] leading-[17px] tracking-[-0.100px] whitespace-nowrap">
        <span>12:27 PM</span>
        <span>6/6/2019</span>
      </div>
    </div>
  </div>
);

export default function App() {
  return (
    <div className="relative h-[768px] w-[1366px] overflow-hidden bg-white font-['Open_Sans',sans-serif]">
      <Browser />
      <Taskbar />
      <Explorer />
      <Dialog />
    </div>
  );
}
